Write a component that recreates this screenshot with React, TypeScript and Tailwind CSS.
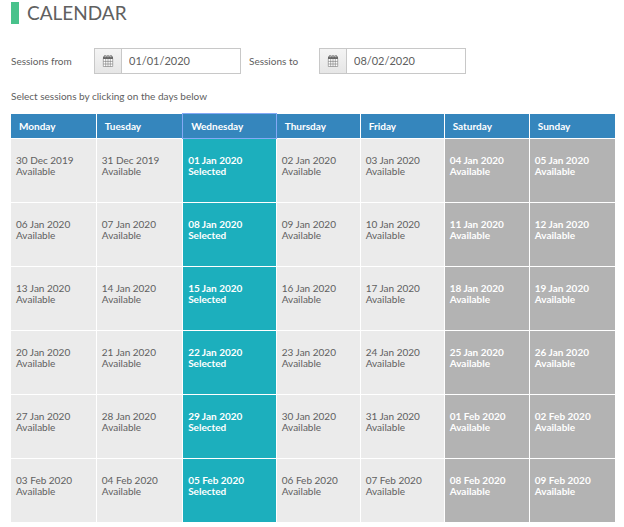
import { useState } from "react";

const days = [
  { name: "Monday", width: "w-[14.2%]" },
  { name: "Tuesday", width: "w-[14.3%]" },
  { name: "Wednesday", width: "w-[15.5%]" },
  { name: "Thursday", width: "w-[13.9%]" },
  { name: "Friday", width: "w-[13.9%]" },
  { name: "Saturday", width: "w-[14.1%]" },
  { name: "Sunday", width: "w-[14.1%]" },
];

const weeks = [
  ["30 Dec 2019", "31 Dec 2019", "01 Jan 2020", "02 Jan 2020", "03 Jan 2020", "04 Jan 2020", "05 Jan 2020"],
  ["06 Jan 2020", "07 Jan 2020", "08 Jan 2020", "09 Jan 2020", "10 Jan 2020", "11 Jan 2020", "12 Jan 2020"],
  ["13 Jan 2020", "14 Jan 2020", "15 Jan 2020", "16 Jan 2020", "17 Jan 2020", "18 Jan 2020", "19 Jan 2020"],
  ["20 Jan 2020", "21 Jan 2020", "22 Jan 2020", "23 Jan 2020", "24 Jan 2020", "25 Jan 2020", "26 Jan 2020"],
  ["27 Jan 2020", "28 Jan 2020", "29 Jan 2020", "30 Jan 2020", "31 Jan 2020", "01 Feb 2020", "02 Feb 2020"],
  ["03 Feb 2020", "04 Feb 2020", "05 Feb 2020", "06 Feb 2020", "07 Feb 2020", "08 Feb 2020", "09 Feb 2020"],
];

const CalendarIcon = () => (
  <svg width="12" height="12" viewBox="0 0 12 12" fill="none" aria-hidden="true">
    <path d="M1 4h10v7.5H1z" fill="#fff" />
    <path d="M1 1.5h10v2.5H1z" fill="#666" />
    <path d="M2.5 0.3h1.4v2H2.5zM5.3 0.3h1.4v2H5.3zM8.1 0.3h1.4v2H8.1z" fill="#eee" stroke="#666" strokeWidth="0.6" />
    <path
      d="M1.3 3.5v8h9.4v-8M1.3 6.4h9.4M1.3 9h9.4M3.7 4v7.5M6 4v7.5M8.3 4v7.5"
      stroke="#777"
      strokeWidth="0.6"
    />
  </svg>
);

const DateField = ({ id, label, value, labelWidth }: { id: string; label: string; value: string; labelWidth: string }) => {
  return (
    <div className="flex items-center">
      <label htmlFor={id} className={`${labelWidth} shrink-0 pb-px text-[10px] leading-4`}>
        {label}
      </label>
      <div className="flex h-[26px] border border-[#c8c8c8]">
        <button
          type="button"
          aria-label={`Open calendar, ${label}`}
          className="flex w-[27px] items-center justify-center border-r border-[#c8c8c8] bg-linear-to-b from-[#f4f4f4] to-[#e6e6e6]"
        >
          <CalendarIcon />
        </button>
        <input
          id={id}
          type="text"
          defaultValue={value}
          className="w-[118px] bg-white px-[7px] text-[11px] outline-none"
        />
      </div>
    </div>
  );
};

const App = () => {
  const [selected, setSelected] = useState(weeks.map((week) => week[2]));

  const toggle = (date: string) => {
    setSelected((current) =>
      current.includes(date) ? current.filter((d) => d !== date) : [...current, date]
    );
  };

  const toggleDay = (index: number) => {
    const column = weeks.map((week) => week[index]);
    setSelected((current) =>
      column.every((d) => current.includes(d))
        ? current.filter((d) => !column.includes(d))
        : [...new Set([...current, ...column])]
    );
  };

  const cellColor = (date: string, index: number) => {
    if (selected.includes(date)) return "bg-[#1cafbd] text-white font-bold";
    if (index > 4) return "bg-[#b3b3b3] text-white font-bold";
    return "bg-[#ebebeb]";
  };

  return (
    <main className="bg-white pt-[2px] pr-[9px] pb-1 pl-[11px] font-['Lato',sans-serif] text-[#606060]">
      <h1 className="flex h-[22px] items-center border-l-8 border-[#48c28b] pl-2 text-[19px]">CALENDAR</h1>
      <div className="mt-6 flex flex-wrap gap-x-2">
        <DateField id="from" label="Sessions from" value="01/01/2020" labelWidth="w-[83px]" />
        <DateField id="to" label="Sessions to" value="08/02/2020" labelWidth="w-[70px]" />
      </div>
      <p className="mt-[14px] text-[10px] leading-4">Select sessions by clicking on the days below</p>
      <table className="mt-[10px] w-full table-fixed border-separate border-spacing-0 text-left text-[10px] leading-[11px]">
        <thead>
          <tr>
            {days.map((day, index) => (
              <th
                key={day.name}
                scope="col"
                className={`${day.width} h-[25px] border-r border-b border-white bg-[#3586bd] p-0 text-white last:border-r-0`}
              >
                <button
                  type="button"
                  onClick={() => toggleDay(index)}
                  className={`block h-6 w-full px-2 text-left font-bold ${
                    index === 2 ? "outline outline-[#84a9f5]" : ""
                  }`}
                >
                  {day.name}
                </button>
              </th>
            ))}
          </tr>
        </thead>
        <tbody>
          {weeks.map((week) => (
            <tr key={week[0]}>
              {week.map((date, index) => (
                <td
                  key={date}
                  className={`h-16 border-r border-b border-white p-0 last:border-r-0 ${cellColor(date, index)}`}
                >
                  <button
                    type="button"
                    onClick={() => toggle(date)}
                    className="block h-[63px] w-full px-[5px] pb-[10px] text-left"
                  >
                    {date}
                    <br />
                    {selected.includes(date) ? "Selected" : "Available"}
                  </button>
                </td>
              ))}
            </tr>
          ))}
        </tbody>
      </table>
    </main>
  );
};

export default App;
